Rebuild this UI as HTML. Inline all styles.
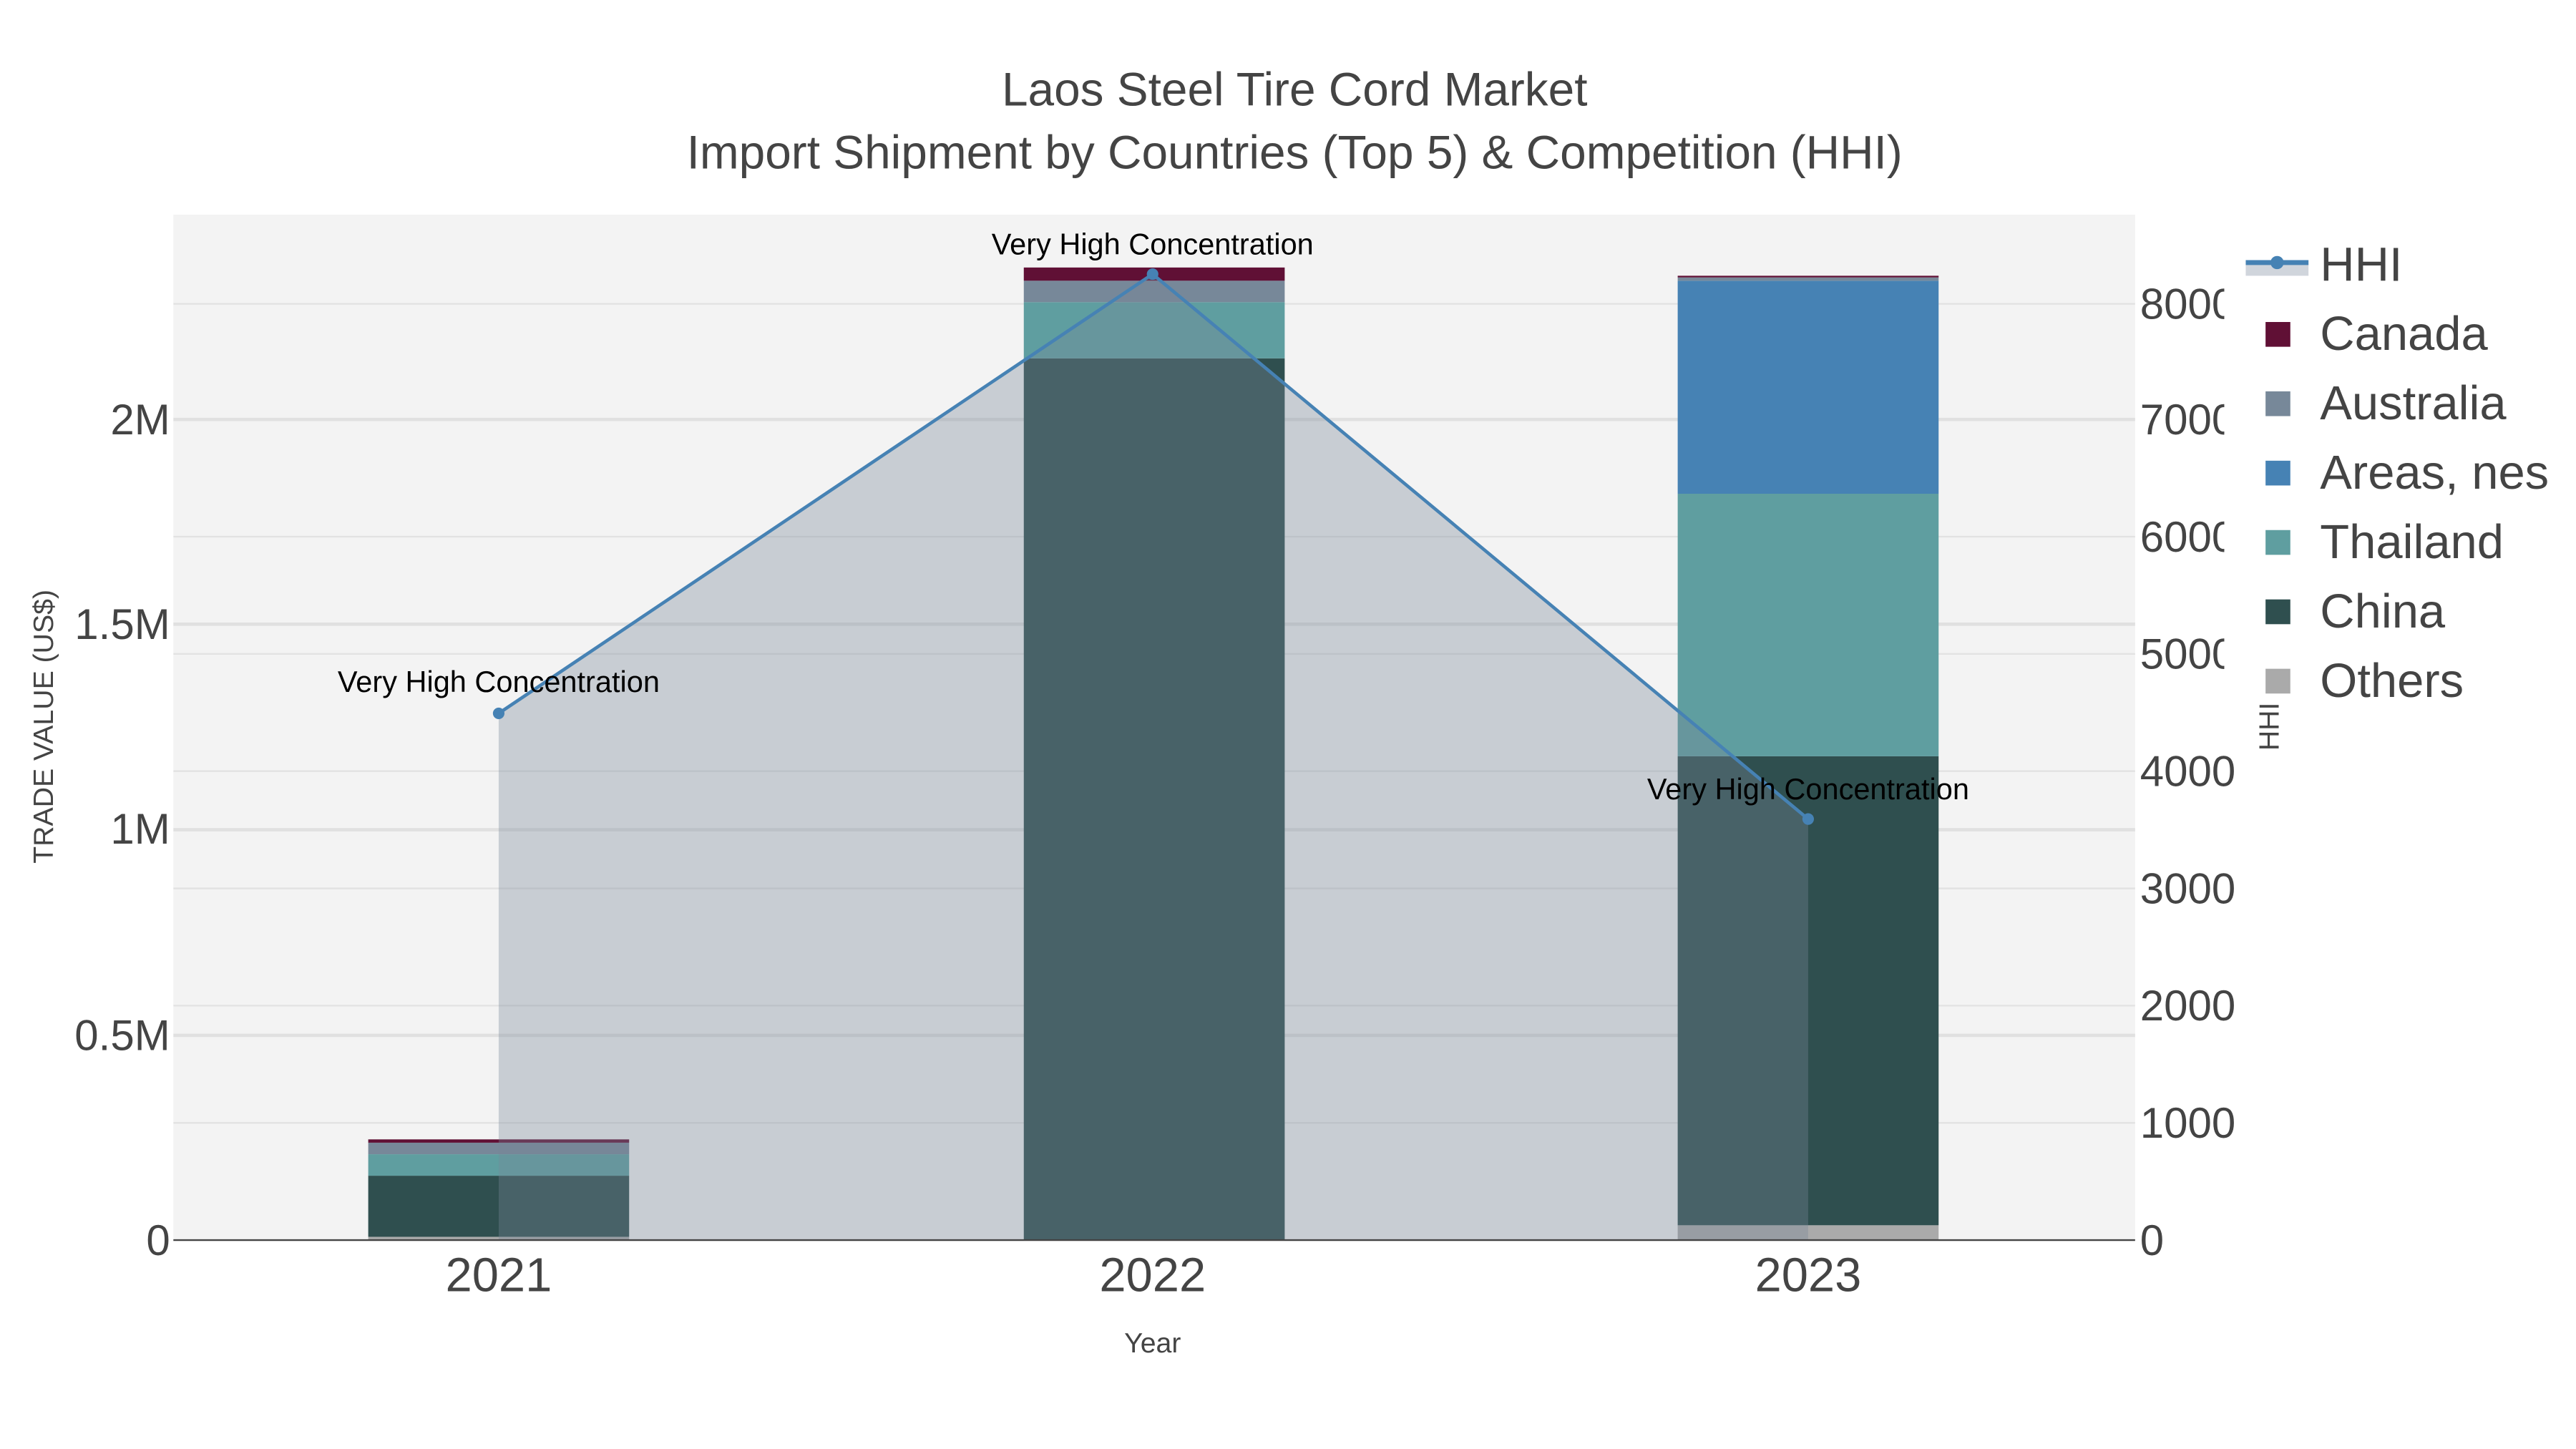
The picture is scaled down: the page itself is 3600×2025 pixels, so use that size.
<!DOCTYPE html>
<html><head><meta charset="utf-8"><style>
html,body{margin:0;padding:0;background:#fff;width:3600px;height:2025px;overflow:hidden}
svg{display:block}
text{font-family:"Liberation Sans",sans-serif}
</style></head><body>
<svg width="3600" height="2025" viewBox="0 0 1560 877.5" xmlns="http://www.w3.org/2000/svg">
<rect x="0" y="0" width="1560" height="877.5" fill="#fff"/>
<rect x="105" y="130" width="1188" height="621" fill="#f3f3f3"/>
<g stroke="#e2e2e2" stroke-width="1">
<line x1="105" x2="1293" y1="680" y2="680"/><line x1="105" x2="1293" y1="609" y2="609"/>
<line x1="105" x2="1293" y1="538" y2="538"/><line x1="105" x2="1293" y1="467" y2="467"/>
<line x1="105" x2="1293" y1="396" y2="396"/><line x1="105" x2="1293" y1="325" y2="325"/>
<line x1="105" x2="1293" y1="184" y2="184"/>
</g>
<g stroke="#e0e0e0" stroke-width="2">
<line x1="105" x2="1293" y1="627" y2="627"/><line x1="105" x2="1293" y1="502.5" y2="502.5"/>
<line x1="105" x2="1293" y1="378" y2="378"/><line x1="105" x2="1293" y1="254" y2="254"/>
</g>
<rect x="223" y="749" width="158" height="2" fill="#aaa"/>
<rect x="223" y="712" width="158" height="37" fill="#2f4f4f"/>
<rect x="223" y="699" width="158" height="13" fill="#5f9ea0"/>
<rect x="223" y="692" width="158" height="7" fill="#778899"/>
<rect x="223" y="690" width="158" height="2" fill="#601035"/>
<rect x="620" y="217" width="158" height="534" fill="#2f4f4f"/>
<rect x="620" y="183" width="158" height="34" fill="#5f9ea0"/>
<rect x="620" y="170" width="158" height="13" fill="#778899"/>
<rect x="620" y="162" width="158" height="8" fill="#601035"/>
<rect x="1016" y="742" width="158" height="9" fill="#aaa"/>
<rect x="1016" y="458" width="158" height="284" fill="#2f4f4f"/>
<rect x="1016" y="299" width="158" height="159" fill="#5f9ea0"/>
<rect x="1016" y="170" width="158" height="129" fill="#4682b4"/>
<rect x="1016" y="168" width="158" height="2" fill="#778899"/>
<rect x="1016" y="167" width="158" height="1" fill="#601035"/>
<polygon points="302,751 302,432 698,166 1095,496 1095,751" fill="rgb(119,136,153)" fill-opacity="0.35"/>
<polyline points="302,432 698,166 1095,496" fill="none" stroke="#4682b4" stroke-width="2"/>
<circle cx="302" cy="432" r="3.5" fill="#4682b4"/><circle cx="698" cy="166" r="3.5" fill="#4682b4"/><circle cx="1095" cy="496" r="3.5" fill="#4682b4"/>
<line x1="105" x2="1293" y1="751" y2="751" stroke="#444" stroke-width="1"/>
<g font-size="18" fill="#000" text-anchor="middle">
<text x="302" y="419">Very High Concentration</text>
<text x="698" y="154">Very High Concentration</text>
<text x="1095" y="484">Very High Concentration</text>
</g>
<g font-size="28.5" fill="#444" text-anchor="middle">
<text x="784" y="64">Laos Steel Tire Cord Market</text>
<text x="784" y="102">Import Shipment by Countries (Top 5) &amp; Competition (HHI)</text>
</g>
<g font-size="26" fill="#444" text-anchor="end">
<text x="103" y="760">0</text><text x="103" y="636">0.5M</text><text x="103" y="511">1M</text>
<text x="103" y="387">1.5M</text><text x="103" y="263">2M</text>
</g>
<g font-size="26" fill="#444">
<text x="1296" y="760">0</text><text x="1296" y="689">1000</text><text x="1296" y="618">2000</text>
<text x="1296" y="547">3000</text><text x="1296" y="476">4000</text><text x="1296" y="405">5000</text>
<text x="1296" y="334">6000</text><text x="1296" y="263">7000</text><text x="1296" y="193">8000</text>
</g>
<g font-size="29" fill="#444" text-anchor="middle">
<text x="302" y="782">2021</text><text x="698" y="782">2022</text><text x="1095" y="782">2023</text>
</g>
<text x="698" y="819" font-size="17" fill="#444" text-anchor="middle">Year</text>
<text transform="translate(32,440) rotate(-90)" font-size="17" fill="#444" text-anchor="middle">TRADE VALUE (US$)</text>
<rect x="1347" y="135" width="213" height="300" fill="#fff"/>
<text transform="translate(1380,440) rotate(-90)" font-size="17" fill="#444" text-anchor="middle">HHI</text>
<rect x="1360" y="160" width="38" height="7" fill="#d0d5dc"/>
<line x1="1360" x2="1398" y1="159" y2="159" stroke="#4682b4" stroke-width="3"/>
<circle cx="1379" cy="159" r="4" fill="#4682b4"/>
<rect x="1372" y="195" width="15" height="15" fill="#601035"/>
<rect x="1372" y="237" width="15" height="15" fill="#778899"/>
<rect x="1372" y="279" width="15" height="15" fill="#4682b4"/>
<rect x="1372" y="321" width="15" height="15" fill="#5f9ea0"/>
<rect x="1372" y="363" width="15" height="15" fill="#2f4f4f"/>
<rect x="1372" y="405" width="15" height="15" fill="#aaa"/>
<g font-size="29" fill="#444">
<text x="1405" y="170">HHI</text><text x="1405" y="212">Canada</text><text x="1405" y="254">Australia</text>
<text x="1405" y="296">Areas, nes</text><text x="1405" y="338">Thailand</text><text x="1405" y="380">China</text>
<text x="1405" y="422">Others</text>
</g>
</svg>
</body></html>
